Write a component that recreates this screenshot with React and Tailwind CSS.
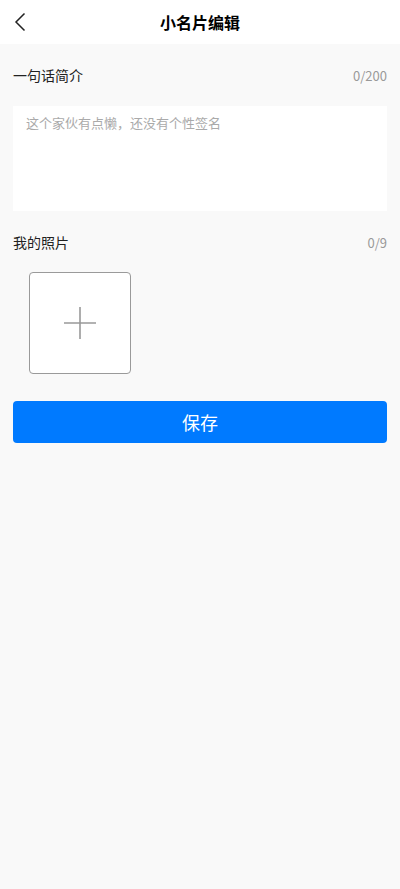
export default function App() {
  return (
    <div
      className="min-h-[889px] bg-[#f9f9f9] text-[#333]"
      style={{ fontFamily: '"Noto Sans CJK SC", "Noto Sans", sans-serif' }}
    >
      <header className="relative flex h-[44px] items-center justify-center bg-white">
        <button className="absolute left-[12px] top-[10px] p-[2px]">
          <svg width="12" height="20" viewBox="0 0 12 20" fill="none">
            <path d="M10.5 1.5 L2 10 L10.5 18.5" stroke="#222" strokeWidth="1.5" />
          </svg>
        </button>
        <h1 className="text-[16px] font-bold text-black">小名片编辑</h1>
      </header>

      <div className="px-[13px]">
        <div className="flex h-[62px] items-center justify-between pt-[1px]">
          <span className="text-[14px] text-[#222]">一句话简介</span>
          <span className="text-[13px] text-[#999]">0/200</span>
        </div>
        <div className="h-[105px] bg-white px-[13px] pt-[8px]">
          <span className="block text-[13px] leading-[18px] text-[#aaa]">
            这个家伙有点懒，还没有个性签名
          </span>
        </div>

        <div className="flex h-[63px] items-center justify-between">
          <span className="text-[14px] text-[#222]">我的照片</span>
          <span className="text-[13px] text-[#999]">0/9</span>
        </div>

        <div className="pl-[16px]">
          <div className="-mt-[2px] flex h-[102px] w-[102px] items-center justify-center rounded-[4px] border border-[#9a9a9a] bg-white">
            <svg width="34" height="34" viewBox="0 0 34 34">
              <path d="M17 1 V33 M1 17 H33" stroke="#999" strokeWidth="1.6" />
            </svg>
          </div>
        </div>

        <button className="mt-[27px] flex h-[42px] w-full items-center justify-center rounded-[4px] bg-[#007aff] text-[18px] text-white">
          保存
        </button>
      </div>
    </div>
  );
}
